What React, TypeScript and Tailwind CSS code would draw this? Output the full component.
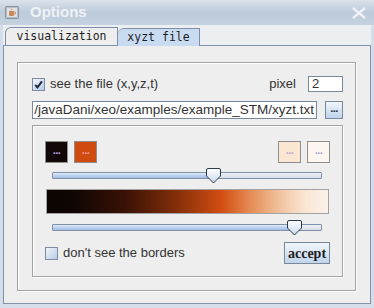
import React from "react";

const sans = "font-['Liberation_Sans',Arial,sans-serif]";

function Dots({ color }: { color: string }) {
  return (
    <span className={`${sans} text-[11px] font-bold leading-none tracking-[-0.5px] ${color}`}>...</span>
  );
}

function Swatch({ bg, dot }: { bg: string; dot: string }) {
  return (
    <div className={`w-[23px] h-[22px] border border-[#8e8e8e] flex items-end justify-center pb-[6px] ${bg}`}>
      <Dots color={dot} />
    </div>
  );
}

function Slider({ thumb }: { thumb: number }) {
  return (
    <div className="relative h-[16px] ml-[7px] mr-[8px]">
      <div className="absolute left-0 right-0 top-[4px] h-[7px] border border-[#7f90a8] bg-gradient-to-b from-[#eef2f6] to-[#d6dee8] rounded-[1px] overflow-hidden">
        <div
          className="h-full bg-gradient-to-b from-[#e2ecf8] via-[#bcd1ee] to-[#a6bfe4] border-r border-[#7f90a8]"
          style={{ width: thumb + 7 }}
        />
      </div>
      <svg
        className="absolute top-0"
        style={{ left: thumb }}
        width="16"
        height="16"
        viewBox="0 0 16 16"
      >
        <defs>
          <linearGradient id={`th${thumb}`} x1="0" y1="0" x2="0" y2="1">
            <stop offset="0" stopColor="#ffffff" />
            <stop offset="1" stopColor="#c9d8ec" />
          </linearGradient>
        </defs>
        <path
          d="M2,0.5 H13 Q14.5,0.5 14.5,2 V8 L7.5,15 L0.5,8 V2 Q0.5,0.5 2,0.5 Z"
          fill={`url(#th${thumb})`}
          stroke="#2b3a4c"
          strokeWidth="1"
        />
      </svg>
    </div>
  );
}

function CheckBox({ checked }: { checked?: boolean }) {
  return (
    <div className="w-[13px] h-[13px] border border-[#7b8ca4] bg-gradient-to-br from-[#f2f6fb] to-[#b9cce4] flex items-center justify-center shrink-0">
      {checked && (
        <svg width="11" height="11" viewBox="0 0 11 11">
          <path d="M2.2,5.8 L4.4,8.4 L9,2.4" fill="none" stroke="#1d2a44" strokeWidth="2" />
        </svg>
      )}
    </div>
  );
}

export default function App() {
  return (
    <div className="w-[374px] h-[308px] flex flex-col bg-[#d3deea] overflow-hidden">
      {/* title bar */}
      <div className="h-[25px] shrink-0 flex items-center bg-gradient-to-b from-[#dbe3ec] via-[#bccad9] to-[#c6d2df] px-[5px]">
        <svg width="14" height="13" viewBox="0 0 14 13">
          <rect x="0.5" y="0.5" width="13" height="12" rx="1" fill="#b6bcc4" stroke="#8d949c" />
          <rect x="2" y="2" width="10" height="9" fill="#dfe3e8" />
          <path d="M4,5 H9 V9 Q9,10 8,10 H5 Q4,10 4,9 Z" fill="#c98a5a" />
          <path d="M9,6 H10.5 V8 H9" fill="none" stroke="#c98a5a" strokeWidth="0.8" />
          <path d="M6,2.5 Q7,3.5 6,4.5" fill="none" stroke="#d07a46" strokeWidth="0.8" />
        </svg>
        <span className={`${sans} ml-[11px] text-[15px] font-bold text-[#eef2f6]`}>Options</span>
        <div className="flex-1" />
        <svg width="16" height="12" viewBox="0 0 16 12" className="mr-[2px]">
          <path d="M2,1 L14,11 M14,1 L2,11" stroke="#eef2f6" strokeWidth="2.4" />
        </svg>
      </div>

      {/* body */}
      <div className="flex-1 flex flex-col ml-[3px] mr-[3px] mb-[4px] bg-[#eceff2]">
        {/* tabs */}
        <div className="h-[20px] shrink-0 flex items-end pl-[2px] font-['DejaVu_Sans_Mono',monospace] text-[11.5px] text-[#1e1e1e]">
          <div className="h-[18px] w-[113px] border border-b-0 border-[#7e8ea6] rounded-tl-[6px] bg-[#eeeeee] flex items-center justify-center">
            visualization
          </div>
          <div className="h-[18px] w-[82px] border border-b-0 border-l-0 border-[#7e8ea6] rounded-tl-[6px] bg-[#c9dbf1] flex items-center justify-center relative top-[1px]">
            xyzt file
          </div>
        </div>

        {/* panel */}
        <div className="flex-1 flex flex-col border border-[#8292aa] bg-[#eeeeee] pt-[16px] pl-[13px] pr-[14px] pb-[12px]">
          <div className="flex-1 flex flex-col border border-[#a2a2a2] shadow-[1px_1px_0_#ffffff,inset_1px_1px_0_#ffffff] pt-[13px] pl-[14px] pr-[12px] pb-[13px]">
            {/* row 1 */}
            <div className={`${sans} h-[16px] flex items-center text-[13px] text-[#333333]`}>
              <CheckBox checked />
              <span className="ml-[5px]">see the file (x,y,z,t)</span>
              <div className="flex-1" />
              <span>pixel</span>
              <div className="ml-[12px] w-[35px] h-[16px] border border-[#7a889c] bg-white flex items-center pl-[3px]">
                2
              </div>
            </div>

            {/* row 2 */}
            <div className="mt-[9px] h-[18px] flex items-center">
              <div className={`${sans} flex-1 h-[18px] border border-[#7a889c] bg-white flex items-center justify-end overflow-hidden whitespace-nowrap text-[13.5px] text-[#333333] pr-[2px]`}>
                /javaDani/xeo/examples/example_STM/xyzt.txt
              </div>
              <div className="ml-[8px] w-[18px] h-[18px] border border-[#7a889c] bg-gradient-to-b from-[#f2f6fb] to-[#bfd2ea] flex items-end justify-center pb-[4px]">
                <Dots color="text-[#1d2a44]" />
              </div>
            </div>

            {/* colour panel */}
            <div className="mt-[6px] flex-1 flex flex-col border border-[#a2a2a2] shadow-[1px_1px_0_#ffffff,inset_1px_1px_0_#ffffff] pt-[15px] px-[12px] pb-[11px]">
              <div className="flex items-center gap-[6px]">
                <Swatch bg="bg-[#120707]" dot="text-[#c6a6ee]" />
                <Swatch bg="bg-[#d04b0f]" dot="text-[#f09a9a]" />
                <div className="flex-1" />
                <Swatch bg="bg-[#fbe6d1]" dot="text-[#c2a2d8]" />
                <Swatch bg="bg-[#fcf5f0]" dot="text-[#b2a2e0]" />
              </div>

              <div className="mt-[5px]">
                <Slider thumb={154} />
              </div>

              <div className="mt-[5px] mx-[1px] h-[25px] border border-[#a2a2a2] bg-[linear-gradient(to_right,#0d0503_0%,#0f0604_9%,#3a1205_28%,#7e2d08_45%,#d24d12_62%,#e48a52_72%,#f2c8a6_84%,#fae6d3_92%,#fbf1ea_100%)]" />

              <div className="mt-[6px]">
                <Slider thumb={235} />
              </div>

              <div className={`${sans} mt-[6px] h-[22px] flex items-center text-[13px] text-[#333333]`}>
                <CheckBox />
                <span className="ml-[5px]">don't see the borders</span>
                <div className="flex-1" />
                <div className="w-[46px] h-[22px] border border-[#7a889c] bg-gradient-to-b from-[#f2f6fb] to-[#c2d4ea] flex items-center justify-center font-['Liberation_Serif',serif] font-bold text-[14px] text-[#1e1e1e]">
                  accept
                </div>
              </div>
            </div>
          </div>
        </div>
      </div>
    </div>
  );
}
